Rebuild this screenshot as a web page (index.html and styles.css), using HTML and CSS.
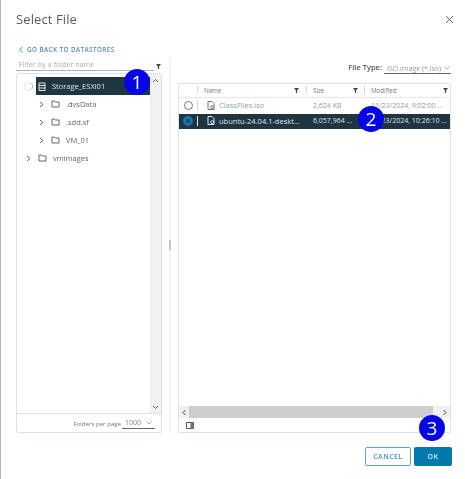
FILE: index.html
```html
<!DOCTYPE html>
<html lang="en">
<head>
  <meta charset="UTF-8">
  <title>Select File</title>
  <link rel="stylesheet" href="styles.css">
</head>
<body>
  <div class="dialog">
    <div class="dialog-head">
      <h1>Select File</h1>
      <svg class="close" width="9" height="9" viewBox="0 0 9 9"><path d="M1 1l7 7M8 1l-7 7"/></svg>
    </div>

    <a class="back"><svg width="6" height="7" viewBox="0 0 6 7"><path d="M4.500 .8L1.500 3.500l3 2.700"/></svg>GO BACK TO DATASTORES</a>

    <div class="browser">
      <div class="left-col">
        <div class="filter-row">
          <span class="filter-text">Filter by a folder name</span>
          <svg class="funnel" width="5" height="5" viewBox="0 0 6 6"><path d="M0 0h6L3.700 3v3H2.300V3z"/></svg>
        </div>
        <div class="panel tree-panel">
          <div class="tree-body">
            <ul class="tree">
              <li class="tree-row root">
                <span class="spinner"></span>
                <span class="tree-selected">
                  <svg class="ic-store" width="8" height="9" viewBox="0 0 8 9"><path d="M1 1h6v7.500H1zM1 3.500h6M1 6h6"/></svg>
                  Storage_ESXi01
                </span>
              </li>
              <li class="tree-row lvl2">
                <svg class="chev" width="5" height="7" viewBox="0 0 5 7"><path d="M1 1l3 2.500L1 6"/></svg>
                <svg class="folder" width="9" height="8" viewBox="0 0 9 8"><path d="M1 1h2.500l.8 1H8v5H1z"/></svg>
                <span>.dvsData</span>
              </li>
              <li class="tree-row lvl2">
                <svg class="chev" width="5" height="7" viewBox="0 0 5 7"><path d="M1 1l3 2.500L1 6"/></svg>
                <svg class="folder" width="9" height="8" viewBox="0 0 9 8"><path d="M1 1h2.500l.8 1H8v5H1z"/></svg>
                <span>.sdd.sf</span>
              </li>
              <li class="tree-row lvl2">
                <svg class="chev" width="5" height="7" viewBox="0 0 5 7"><path d="M1 1l3 2.500L1 6"/></svg>
                <svg class="folder" width="9" height="8" viewBox="0 0 9 8"><path d="M1 1h2.500l.8 1H8v5H1z"/></svg>
                <span>VM_01</span>
              </li>
              <li class="tree-row lvl1">
                <svg class="chev" width="5" height="7" viewBox="0 0 5 7"><path d="M1 1l3 2.500L1 6"/></svg>
                <svg class="folder" width="9" height="8" viewBox="0 0 9 8"><path d="M1 1h2.500l.8 1H8v5H1z"/></svg>
                <span>vmimages</span>
              </li>
            </ul>
            <div class="vscroll">
              <svg width="7" height="5" viewBox="0 0 7 5"><path d="M1 4l2.500-2.500L6 4"/></svg>
              <svg width="7" height="5" viewBox="0 0 7 5"><path d="M1 1l2.500 2.500L6 1"/></svg>
            </div>
          </div>
          <div class="tree-foot">
            <span>Folders per page</span>
            <span class="page-select">1000<svg width="6" height="4" viewBox="0 0 6 4"><path d="M.5 .5L3 3 5.500 .5"/></svg></span>
          </div>
        </div>
      </div>

      <div class="divider"></div>

      <div class="right-col">
        <div class="type-row">
          <span class="type-label">File Type:</span>
          <span class="type-select">ISO Image (*.iso)<svg width="6" height="4" viewBox="0 0 6 4"><path d="M.5 .5L3 3 5.500 .5"/></svg></span>
        </div>
        <div class="panel grid-panel">
          <div class="grid-row grid-head">
            <span class="cell c-radio"></span>
            <span class="cell c-name">Name<svg class="funnel" width="5" height="5" viewBox="0 0 6 6"><path d="M0 0h6L3.700 3v3H2.300V3z"/></svg></span>
            <span class="cell c-size">Size<svg class="funnel" width="5" height="5" viewBox="0 0 6 6"><path d="M0 0h6L3.700 3v3H2.300V3z"/></svg></span>
            <span class="cell c-mod">Modified<svg class="funnel" width="5" height="5" viewBox="0 0 6 6"><path d="M0 0h6L3.700 3v3H2.300V3z"/></svg></span>
          </div>
          <div class="grid-row file-row">
            <span class="cell c-radio"><span class="radio"></span></span>
            <span class="cell c-name">
              <svg class="file-ic" width="8" height="9" viewBox="0 0 8 9"><path d="M1 .5h4l2 2v6H1z"/><circle cx="5.200" cy="6.200" r="1.500"/></svg>
              <span class="link">ClassFiles.iso</span>
            </span>
            <span class="cell c-size">2,624 KB</span>
            <span class="cell c-mod">11/23/2024, 9:02:00 ...</span>
          </div>
          <div class="grid-row file-row selected">
            <span class="cell c-radio"><span class="radio on"></span></span>
            <span class="cell c-name">
              <svg class="file-ic" width="8" height="9" viewBox="0 0 8 9"><path d="M1 .5h4l2 2v6H1z"/><circle cx="5.200" cy="6.200" r="1.500"/></svg>
              <span>ubuntu-24.04.1-deskt…</span>
            </span>
            <span class="cell c-size">6,057,964 ...</span>
            <span class="cell c-mod">11/23/2024, 10:26:10 ...</span>
          </div>
          <div class="grid-space"></div>
          <div class="hscroll">
            <svg width="5" height="7" viewBox="0 0 5 7"><path d="M4 1L1.500 3.500 4 6"/></svg>
            <span class="hthumb"></span>
            <svg width="5" height="7" viewBox="0 0 5 7"><path d="M1 1l2.500 2.500L1 6"/></svg>
          </div>
          <div class="grid-foot">
            <svg width="8" height="7" viewBox="0 0 8 7"><path d="M.5 .5h7v6h-7zM5 .5v6"/><path class="fill" d="M5 .5h2.500v6H5z"/></svg>
          </div>
        </div>
      </div>
    </div>

    <div class="actions">
      <button class="btn btn-outline">CANCEL</button>
      <button class="btn btn-primary">OK</button>
    </div>
  </div>

  <span class="badge badge-1">1</span>
  <span class="badge badge-2">2</span>
  <span class="badge badge-3">3</span>
</body>
</html>
```

FILE: styles.css
```css
* {
  box-sizing: border-box;
}
html, body {
  height: 100%;
}
body {
  margin: 0;
  background: #fff;
  font-family: "Open Sans", Arial, sans-serif;
  color: #666;
  overflow: hidden;
}
svg {
  fill: none;
  stroke: currentColor;
  stroke-width: 1;
  flex: none;
}
.dialog {
  width: 465px;
  height: 479px;
  border-left: 1px solid #b5b5b5;
  padding: 0 14px 0 15px;
  display: flex;
  flex-direction: column;
  filter: blur(.35px);
}
.dialog-head {
  display: flex;
  justify-content: space-between;
  align-items: center;
  height: 37px;
  padding-top: 1px;
}
h1 {
  margin: 0;
  font-size: 13px;
  font-weight: 400;
  color: #5b5b5b;
  letter-spacing: .1px;
}
.close {
  color: #666;
  margin-right: -3px;
}
.back {
  display: flex;
  align-items: center;
  gap: 3px;
  margin-top: 7px;
  height: 10px;
  padding-left: 2px;
  font-size: 6.300px;
  font-weight: 600;
  letter-spacing: .42px;
  color: #4c8fb8;
}
.browser {
  display: flex;
  height: 376px;
  margin-top: 3px;
}
.left-col {
  width: 146px;
  display: flex;
  flex-direction: column;
}
.filter-row {
  display: flex;
  align-items: center;
  justify-content: space-between;
  height: 14px;
  flex: none;
}
.filter-text {
  flex: 1;
  height: 14px;
  line-height: 15px;
  font-size: 6.800px;
  color: #aaa;
  letter-spacing: .17px;
  border-bottom: 1px solid #aab4bb;
  padding-left: 3px;
}
.funnel {
  fill: #444;
  stroke: none;
}
.filter-row .funnel {
  margin: 4px 1px 0 2px;
}
.panel {
  background: #fff;
  border: 1px solid #dce3e8;
  border-radius: 2px;
  display: flex;
  flex-direction: column;
}
.tree-panel {
  margin-top: 2px;
  flex: 1;
}
.tree-body {
  flex: 1;
  display: flex;
  min-height: 0;
}
.tree {
  flex: 1;
  list-style: none;
  margin: 0;
  padding: 3px 0 0;
  font-size: 7.500px;
  color: #666;
}
.tree-row {
  height: 18px;
  display: flex;
  align-items: center;
  gap: 5px;
}
.root {
  padding-left: 7px;
  gap: 3px;
}
.lvl2 {
  padding-left: 22px;
  gap: 7px;
}
.lvl1 {
  padding-left: 9px;
  gap: 7px;
}
.lvl2 .folder, .lvl1 .folder {
  margin-right: -1px;
}
.spinner {
  width: 9px;
  height: 9px;
  border-radius: 50%;
  border: 1px solid #dfe7ec;
  border-right-color: #8db6d0;
  flex: none;
}
.tree-selected {
  flex: 1;
  height: 18px;
  display: flex;
  align-items: center;
  gap: 6px;
  padding-left: 2px;
  background: #1f3540;
  color: #dfe5e8;
}
.vscroll {
  width: 11px;
  background: #f0f0f0;
  display: flex;
  flex-direction: column;
  justify-content: space-between;
  align-items: center;
  padding: 4px 0 3px;
  color: #555;
}
.tree-foot {
  height: 19px;
  border-top: 1px solid #dce3e8;
  display: flex;
  align-items: center;
  justify-content: flex-end;
  gap: 1px;
  padding-right: 6px;
  font-size: 6.100px;
  color: #777;
}
.page-select {
  width: 33px;
  height: 11px;
  display: flex;
  align-items: center;
  justify-content: space-between;
  padding: 0 3px;
  font-size: 7px;
  color: #888;
  border-bottom: 1px solid #667;
}
.page-select svg, .type-select svg {
  color: #aaa;
}
.divider {
  width: 2px;
  margin: 0 7px;
  background: #f3f4f5;
  display: flex;
  align-items: center;
}
.divider::after {
  content: "";
  width: 2px;
  height: 10px;
  background: #c4c8cb;
}
.right-col {
  flex: 1;
  display: flex;
  flex-direction: column;
}
.type-row {
  height: 26px;
  display: flex;
  justify-content: flex-end;
  align-items: flex-start;
  gap: 2px;
  padding-top: 6px;
  flex: none;
}
.type-label {
  font-size: 7.500px;
  font-weight: 600;
  color: #555;
  line-height: 9px;
}
.type-select {
  width: 67px;
  height: 11px;
  display: flex;
  justify-content: space-between;
  align-items: center;
  padding: 0 1px 0 3px;
  font-size: 7px;
  color: #999;
  border-bottom: 1px solid #667;
}
.grid-panel {
  flex: 1;
  min-height: 0;
}
.grid-row {
  display: flex;
  align-items: center;
}
.grid-head {
  height: 14px;
  padding-bottom: 1px;
  font-size: 6.200px;
  color: #777;
  border-bottom: 1px solid #e4e8eb;
}
.cell {
  display: flex;
  align-items: center;
  height: 100%;
  white-space: nowrap;
}
.c-radio {
  width: 18px;
  justify-content: center;
}
.c-name {
  width: 109px;
  padding: 0 7px;
  gap: 4px;
}
.c-size {
  width: 58px;
  padding: 0 6px 0 7px;
}
.c-mod {
  flex: 1;
  padding: 0 2px 0 7px;
}
.grid-head .cell {
  justify-content: space-between;
  position: relative;
}
.grid-head .c-name::before,
.grid-head .c-size::before,
.grid-head .c-mod::before,
.file-row .c-name::before {
  content: "";
  position: absolute;
  left: 0;
  top: 2px;
  bottom: 2px;
  width: 1px;
  background: #d0d6da;
}
.file-row .c-name {
  position: relative;
}
.file-row {
  height: 15.500px;
  padding-bottom: 1px;
  font-size: 7px;
  color: #999;
}
.file-row .c-name span {
  font-size: 7.500px;
}
.file-row .link {
  color: #8aa4b4;
}
.file-ic {
  color: #777;
  margin-left: 3px;
}
.selected {
  background: #1f3540;
  color: #dfe5e8;
}
.selected .file-ic {
  color: #dfe5e8;
}
.selected .c-name::before {
  background: #dfe5e8;
}
.radio {
  width: 9px;
  height: 9px;
  border-radius: 50%;
  border: 1px solid #777;
  background: #fff;
}
.radio.on {
  width: 10px;
  height: 10px;
  border: 3px solid #1a72a3;
  background: #0d4a70;
}
.grid-space {
  flex: 1;
}
.hscroll {
  height: 12px;
  display: flex;
  align-items: center;
  background: #f0f0f0;
  color: #444;
}
.hscroll svg {
  width: 10px;
}
.hthumb {
  flex: 1;
  height: 100%;
  margin-right: 7px;
  background: #cdcdcd;
}
.grid-foot {
  height: 14px;
  display: flex;
  align-items: center;
  padding-left: 7px;
  color: #555;
}
.grid-foot .fill {
  fill: #777;
  stroke: none;
}
.actions {
  display: flex;
  justify-content: flex-end;
  gap: 3px;
  margin: 14px -1px 0 0;
}
.btn {
  height: 19px;
  font-family: inherit;
  font-size: 7px;
  font-weight: 600;
  letter-spacing: .5px;
  border-radius: 2px;
  padding: 0;
}
.btn-outline {
  width: 46px;
  background: #fff;
  color: #3f94bb;
  border: 1px solid #5ba5c8;
}
.btn-primary {
  width: 38px;
  background: #0079ad;
  color: #d9edf5;
  border: none;
}
.badge {
  position: absolute;
  width: 26px;
  height: 26px;
  border-radius: 50%;
  background: #0505e6;
  color: #fff;
  font-size: 19px;
  line-height: 26px;
  text-align: center;
}
.badge-1 {
  left: 124px;
  top: 69px;
}
.badge-2 {
  left: 358px;
  top: 106px;
}
.badge-3 {
  left: 419px;
  top: 415px;
}
```
